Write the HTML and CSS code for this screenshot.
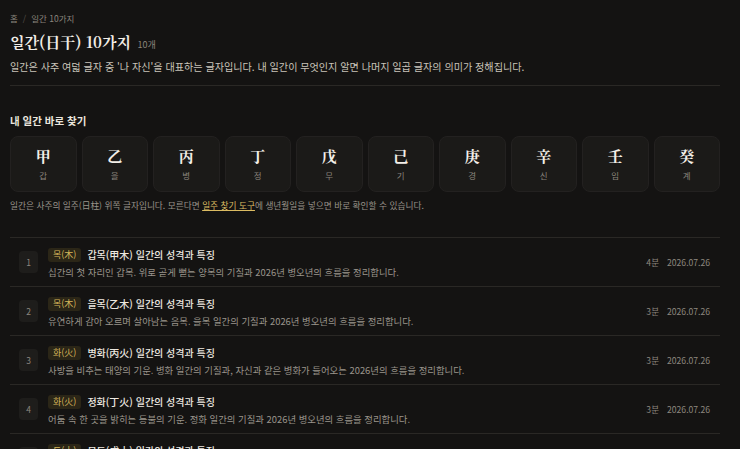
FILE: index.html
```html
<!DOCTYPE html>
<html lang="ko">

<head>
    <meta charset="UTF-8">
    <meta name="viewport" content="width=device-width, initial-scale=1.0">
    <title>일간(日干) 10가지</title>
    <link rel="stylesheet" href="styles.css">
</head>

<body>
    <div class="page">
        <header class="head">
            <div class="crumbs"><a href="#">홈</a><span class="sep">/</span><span>일간 10가지</span></div>
            <h1>일간(日干) 10가지 <small>10개</small></h1>
            <p class="lead">일간은 사주 여덟 글자 중 '나 자신'을 대표하는 글자입니다. 내 일간이 무엇인지 알면 나머지 일곱 글자의 의미가 정해집니다.</p>
        </header>

        <section class="finder">
            <h2>내 일간 바로 찾기</h2>
            <div class="stems">
                <a class="stem" href="#"><b>甲</b><span>갑</span></a>
                <a class="stem" href="#"><b>乙</b><span>을</span></a>
                <a class="stem" href="#"><b>丙</b><span>병</span></a>
                <a class="stem" href="#"><b>丁</b><span>정</span></a>
                <a class="stem" href="#"><b>戊</b><span>무</span></a>
                <a class="stem" href="#"><b>己</b><span>기</span></a>
                <a class="stem" href="#"><b>庚</b><span>경</span></a>
                <a class="stem" href="#"><b>辛</b><span>신</span></a>
                <a class="stem" href="#"><b>壬</b><span>임</span></a>
                <a class="stem" href="#"><b>癸</b><span>계</span></a>
            </div>
            <p class="note">일간은 사주의 일주(日柱) 위쪽 글자입니다. 모른다면 <a href="#">일주 찾기 도구</a>에 생년월일을 넣으면 바로 확인할 수 있습니다.</p>
        </section>

        <ul class="posts">
            <li class="post">
                <span class="num">1</span>
                <div class="body">
                    <div class="top"><span class="tag">목(木)</span><a href="#">갑목(甲木) 일간의 성격과 특징</a></div>
                    <p>십간의 첫 자리인 갑목. 위로 곧게 뻗는 양목의 기질과 2026년 병오년의 흐름을 정리합니다.</p>
                </div>
                <div class="meta"><span>4분</span><span>2026.07.26</span></div>
            </li>
            <li class="post">
                <span class="num">2</span>
                <div class="body">
                    <div class="top"><span class="tag">목(木)</span><a href="#">을목(乙木) 일간의 성격과 특징</a></div>
                    <p>유연하게 감아 오르며 살아남는 음목. 을목 일간의 기질과 2026년 병오년의 흐름을 정리합니다.</p>
                </div>
                <div class="meta"><span>3분</span><span>2026.07.26</span></div>
            </li>
            <li class="post">
                <span class="num">3</span>
                <div class="body">
                    <div class="top"><span class="tag">화(火)</span><a href="#">병화(丙火) 일간의 성격과 특징</a></div>
                    <p>사방을 비추는 태양의 기운. 병화 일간의 기질과, 자신과 같은 병화가 들어오는 2026년의 흐름을 정리합니다.</p>
                </div>
                <div class="meta"><span>3분</span><span>2026.07.26</span></div>
            </li>
            <li class="post">
                <span class="num">4</span>
                <div class="body">
                    <div class="top"><span class="tag">화(火)</span><a href="#">정화(丁火) 일간의 성격과 특징</a></div>
                    <p>어둠 속 한 곳을 밝히는 등불의 기운. 정화 일간의 기질과 2026년 병오년의 흐름을 정리합니다.</p>
                </div>
                <div class="meta"><span>3분</span><span>2026.07.26</span></div>
            </li>
            <li class="post">
                <span class="num">5</span>
                <div class="body">
                    <div class="top"><span class="tag">토(土)</span><a href="#">무토(戊土) 일간의 성격과 특징</a></div>
                    <p>넓은 대지와 큰 산의 기운. 무토 일간의 기질과 2026년 병오년의 흐름을 정리합니다.</p>
                </div>
                <div class="meta"><span>3분</span><span>2026.07.26</span></div>
            </li>
        </ul>
    </div>
</body>

</html>
```

FILE: styles.css
```css
body {
    margin: 0;
    background-color: #141312;
    color: #e9e4dc;
    font-family: "Noto Sans CJK KR", "Noto Sans", sans-serif;
}

a {
    color: inherit;
    text-decoration: none;
}

.page {
    padding: 11px 20px 0 10px;
}

.head {
    padding-bottom: 11px;
    border-bottom: 1px solid #2a2825;
}

.crumbs {
    font-size: 8.5px;
    line-height: 14px;
    color: #8a847c;
}

.crumbs .sep {
    margin: 0 5px;
    color: #55514b;
}

h1 {
    margin: 6px 0 0;
    font-family: "Noto Serif CJK KR", "Noto Sans CJK KR", serif;
    font-size: 15px;
    line-height: 22px;
    font-weight: bold;
    color: #f1ede6;
}

h1 small {
    margin-left: 2px;
    font-family: "Noto Sans CJK KR", sans-serif;
    font-size: 9px;
    font-weight: normal;
    color: #8a847c;
}

.lead {
    margin: 3px 0 0;
    font-size: 10.1px;
    line-height: 15px;
    color: #c9c3b9;
}

.finder {
    padding-top: 27px;
    padding-bottom: 25px;
    border-bottom: 1px solid #2a2825;
}

.finder h2 {
    margin: 0;
    font-size: 10.5px;
    line-height: 16px;
    font-weight: bold;
    color: #ebe6de;
}

.stems {
    display: grid;
    grid-template-columns: repeat(10, 1fr);
    gap: 5px;
    margin-top: 7px;
}

.stem {
    display: flex;
    flex-direction: column;
    align-items: center;
    gap: 3px;
    padding: 9px 0 10px;
    background: #1b1a18;
    border: 1px solid #232120;
    border-radius: 8px;
}

.stem b {
    font-family: "Noto Serif CJK KR", "Noto Sans CJK KR", serif;
    font-size: 15px;
    line-height: 20px;
    font-weight: bold;
    color: #f3efe8;
}

.stem span {
    font-size: 8.5px;
    line-height: 12px;
    color: #8a847c;
}

.note {
    margin: 7px 0 0;
    font-size: 8.7px;
    line-height: 13px;
    color: #9a948b;
}

.note a {
    color: #dcbc62;
    text-decoration: underline;
}

.posts {
    list-style: none;
    margin: 0;
    padding: 0;
}

.post {
    display: flex;
    align-items: center;
    gap: 10px;
    height: 48px;
    padding: 0 10px 0 9px;
    border-bottom: 1px solid #2a2825;
}

.num {
    flex: none;
    width: 19px;
    height: 22px;
    display: flex;
    align-items: center;
    justify-content: center;
    background: #1e1d1b;
    border-radius: 4px;
    font-size: 8.5px;
    color: #8d877f;
}

.body {
    flex: 1;
    min-width: 0;
    padding-top: 2px;
}

.top {
    display: flex;
    align-items: center;
    gap: 6px;
    font-size: 10px;
    line-height: 15px;
    font-weight: 500;
    color: #ede8e0;
}

.tag {
    padding: 0 5px;
    background: #2b2617;
    border-radius: 3px;
    font-size: 9px;
    line-height: 14px;
    font-weight: normal;
    color: #d6b55a;
}

.body p {
    margin: 3px 0 0;
    font-size: 9.4px;
    line-height: 14px;
    color: #9b958c;
    white-space: nowrap;
    overflow: hidden;
}

.meta {
    flex: none;
    display: flex;
    gap: 8px;
    font-size: 8.6px;
    color: #8d877f;
}
```
